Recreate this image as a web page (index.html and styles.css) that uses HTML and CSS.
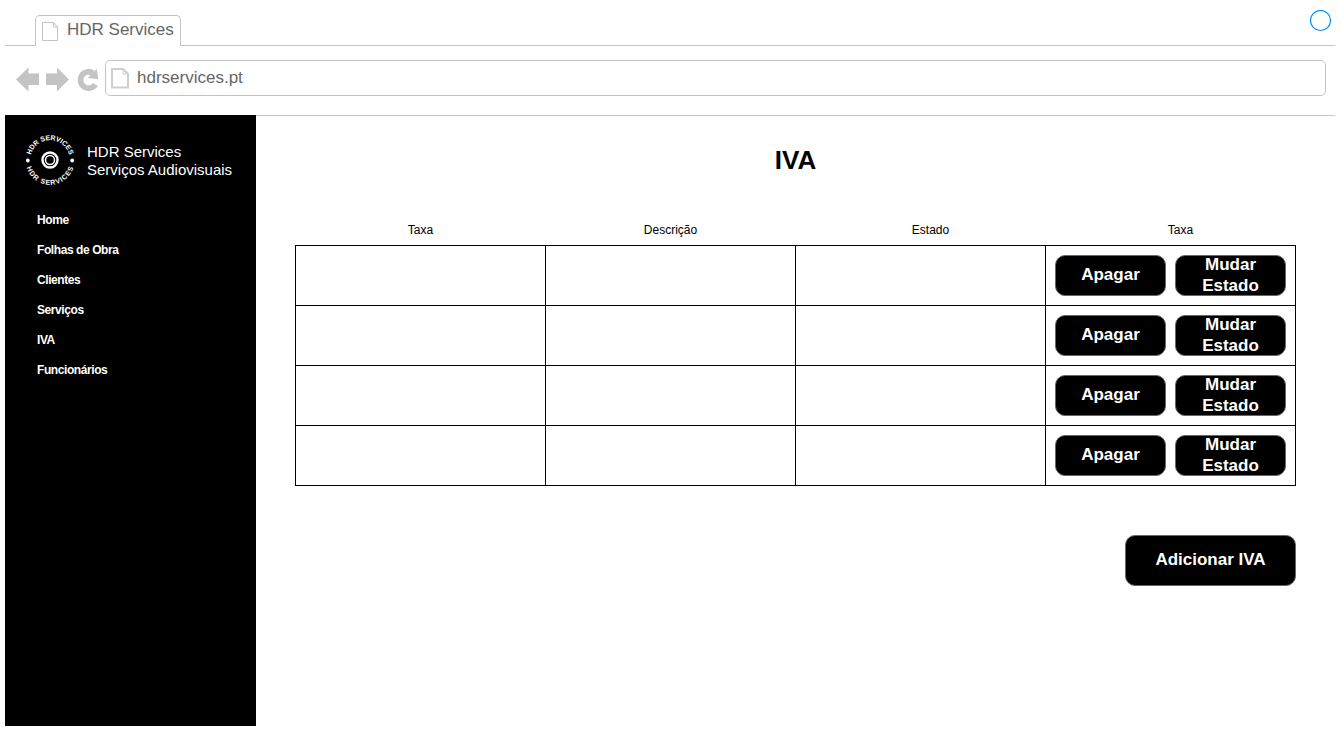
FILE: index.html
```html
<!DOCTYPE html>
<html lang="pt">
<head>
<meta charset="utf-8">
<title>HDR Services</title>
<link rel="stylesheet" href="styles.css">
</head>
<body>
<div class="browser">
  <div class="tabs">
    <div class="tabs-lead"></div>
    <div class="tab">
      <svg class="tab-icon" width="17" height="20" viewBox="0 0 17 20"><path d="M.5.5H11.5L15.5 5V18.5H.5ZM11.5.5V5H15.5" fill="none" stroke="#c4c4c4"/></svg>
      <span class="tab-title">HDR Services</span>
    </div>
    <div class="tabs-rest">
      <svg class="window-dot" width="22" height="22" viewBox="0 0 22 22"><circle cx="10.500" cy="10.500" r="10" fill="none" stroke="#008cff" stroke-width="1.200"/></svg>
    </div>
  </div>
  <div class="toolbar">
    <svg class="controls" width="84" height="26" viewBox="0 0 84 26" fill="#c4c4c4">
      <path d="M0 13.500 12.500 1.500V7.500H23V19H12.500V25.500Z"/>
      <path d="M53 13.500 41 1.500V7.500H30V19H41V25.500Z"/>
      <path d="M79.500 18.500A8.200 8.200 0 1 1 77 7" fill="none" stroke="#c4c4c4" stroke-width="5.800"/>
      <path d="M80.800 2.800 82.300 13.300 71.800 12Z"/>
    </svg>
    <div class="address">
      <svg class="page-icon" width="18" height="21" viewBox="0 0 18 21"><path d="M1 1H12L17 6V19.500H1Z" fill="none" stroke="#cfcfcf" stroke-width="2"/><path d="M12 1V6H17" fill="none" stroke="#cfcfcf"/></svg>
      <span class="url">hdrservices.pt</span>
    </div>
  </div>
  <div class="page">
    <aside class="sidebar">
      <div class="brand">
        <svg class="logo" width="52" height="52" viewBox="0 0 52 52">
          <defs>
            <path id="arc-top" d="M6.200 26A19.800 19.800 0 0 1 45.800 26"/>
            <path id="arc-bottom" d="M1.600 26.500A24.400 24.400 0 0 0 50.400 26.500"/>
          </defs>
          <circle cx="26" cy="26" r="7.500" fill="none" stroke="#fff" stroke-width="2.400"/>
          <circle cx="26" cy="26" r="4.500" fill="none" stroke="#fff" stroke-width="1.500"/>
          <circle cx="3.800" cy="26.500" r="1.900" fill="#fff"/>
          <circle cx="48.200" cy="26.500" r="1.900" fill="#fff"/>
          <text class="logo-text"><textPath href="#arc-top" startOffset="50%" text-anchor="middle" textLength="52">HDR SERVICES</textPath></text>
          <text class="logo-text"><textPath href="#arc-bottom" startOffset="50%" text-anchor="middle" textLength="62">HDR SERVICES</textPath></text>
        </svg>
        <div class="brand-name">HDR Services<br>Serviços Audiovisuais</div>
      </div>
      <nav class="menu">
        <a>Home</a>
        <a>Folhas de Obra</a>
        <a>Clientes</a>
        <a>Serviços</a>
        <a>IVA</a>
        <a>Funcionários</a>
      </nav>
    </aside>
    <main class="content">
      <h1>IVA</h1>
      <table class="rates">
        <thead><tr><th>Taxa</th><th>Descrição</th><th class="shifted">Estado</th><th class="shifted">Taxa</th></tr></thead>
        <tbody>
          <tr><td></td><td></td><td></td><td><div class="actions"><button class="btn">Apagar</button><button class="btn">Mudar Estado</button></div></td></tr>
          <tr><td></td><td></td><td></td><td><div class="actions"><button class="btn">Apagar</button><button class="btn">Mudar Estado</button></div></td></tr>
          <tr><td></td><td></td><td></td><td><div class="actions"><button class="btn">Apagar</button><button class="btn">Mudar Estado</button></div></td></tr>
          <tr><td></td><td></td><td></td><td><div class="actions"><button class="btn">Apagar</button><button class="btn">Mudar Estado</button></div></td></tr>
        </tbody>
      </table>
      <button class="btn btn-add">Adicionar IVA</button>
    </main>
  </div>
</div>
</body>
</html>
```
FILE: styles.css
```css
* { box-sizing: border-box; }
body {
  margin: 0;
  background: #fff;
  color: #000;
  font-family: "Liberation Sans", Arial, sans-serif;
}
.browser { width: 1330px; margin-left: 5px; }
.tabs { display: flex; height: 46px; }
.tabs-lead { width: 30px; border-bottom: 1px solid #c4c4c4; }
.tab {
  display: flex;
  width: 146px;
  margin-top: 15px;
  padding: 6px 0 0 6px;
  border: 1px solid #c4c4c4;
  border-bottom: 0;
  border-radius: 5px 5px 0 0;
}
.tab-icon { flex: none; }
.tab-title {
  margin: -2px 0 0 8px;
  font-size: 17px;
  line-height: 20px;
  color: #666;
  white-space: nowrap;
}
.tabs-rest {
  display: flex;
  flex: 1;
  justify-content: flex-end;
  padding: 10px 3px 0 0;
  border-bottom: 1px solid #c4c4c4;
}
.toolbar {
  display: flex;
  height: 69px;
  padding: 14px 9px 0 11px;
}
.controls { flex: none; margin-top: 6px; }
.address {
  display: flex;
  flex: 1;
  height: 36px;
  margin-left: 5px;
  padding: 7px 0 0 5px;
  border: 1px solid #c4c4c4;
  border-radius: 5px;
}
.url {
  margin-left: 8px;
  font-size: 17px;
  line-height: 20px;
  color: #666;
}
.page { display: flex; height: 611px; }
.sidebar { width: 251px; background: #000; color: #fff; }
.brand { display: flex; padding: 19px 0 0 19px; }
.logo-text {
  fill: #fff;
  font-size: 7px;
  font-weight: bold;
}
.brand-name {
  margin: 9px 0 0 11px;
  font-size: 15px;
  line-height: 18px;
  white-space: nowrap;
}
.menu {
  display: flex;
  flex-direction: column;
  padding: 19px 0 0 32px;
  font-size: 12px;
  font-weight: bold;
  letter-spacing: -0.42px;
  line-height: 30px;
}
.content {
  display: flex;
  flex: 1;
  flex-direction: column;
  padding: 29px 39px 0 39px;
  border-top: 1px solid #c4c4c4;
}
h1 {
  margin: 0;
  font-size: 26px;
  line-height: 30px;
  text-align: center;
}
.rates {
  width: 1001px;
  margin-top: 39px;
  border-collapse: collapse;
  table-layout: fixed;
}
.rates th {
  height: 31px;
  padding: 2px 0 0;
  font-size: 12px;
  font-weight: normal;
}
.rates th.shifted { padding-left: 20px; }
.rates td { height: 60px; padding: 0; border: 1px solid #000; }
.actions { display: flex; gap: 9px; padding-left: 9px; }
.btn {
  display: flex;
  align-items: center;
  justify-content: center;
  width: 111px;
  height: 41px;
  padding: 0 20px 1px;
  border: 1px solid #666;
  border-radius: 10px;
  background: #000;
  color: #fff;
  font-family: inherit;
  font-size: 17px;
  font-weight: bold;
  line-height: 21px;
}
.btn-add {
  align-self: flex-end;
  width: 171px;
  height: 51px;
  margin-top: 49px;
}
```
